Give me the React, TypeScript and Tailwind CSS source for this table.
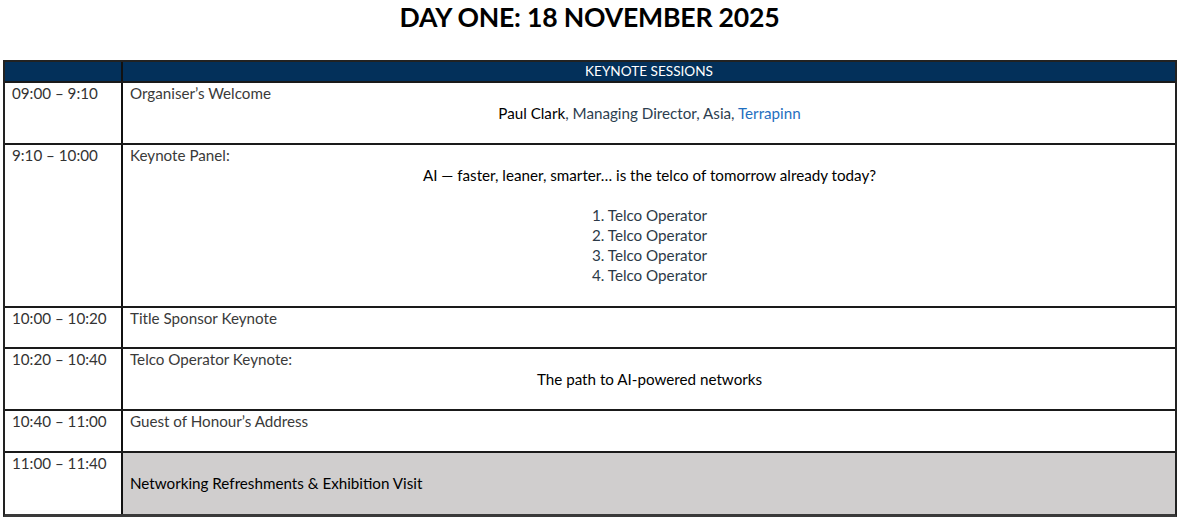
import React from "react";

const F = { fontFamily: "Lato, 'Open Sans', sans-serif" } as React.CSSProperties;

function Line({ children, center = false, className = "" }: { children?: React.ReactNode; center?: boolean; className?: string }) {
  return (
    <div className={`h-[20px] leading-[20px] whitespace-nowrap ${center ? "text-center" : ""} ${className}`}>
      {children ?? "\u00a0"}
    </div>
  );
}

function Row({ time, children, gray = false, extra = "" }: { time: string; children: React.ReactNode; gray?: boolean; extra?: string }) {
  return (
    <div className={`grid grid-cols-[118px_1fr] border-t-2 border-[#1a1a1a]`}>
      <div className="pl-[7px] text-[#333333] border-r-2 border-[#111111]">
        <Line>{time}</Line>
      </div>
      <div className={`pl-[7px] pr-[6px] ${extra} ${gray ? "bg-[#d0cece]" : "bg-white"}`}>{children}</div>
    </div>
  );
}

export default function App() {
  return (
    <div className="w-[1179px] h-[518px] bg-white text-[15.2px]" style={F}>
      <h1 className="text-center font-bold text-[26.6px] leading-[34px] text-black tracking-[-0.2px]">
        DAY ONE: 18 NOVEMBER 2025
      </h1>
      <div className="ml-[3px] mt-[26px] w-[1174px] border-x-2 border-t-2 border-b-[3px] border-[#222222] border-b-[#3a3a3a]">
        <div className="grid grid-cols-[118px_1fr] bg-[#03305a] h-[19px]">
          <div className="border-r-2 border-[#111111]" />
          <div className="text-center text-white text-[13.6px] leading-[19px]">KEYNOTE SESSIONS</div>
        </div>
        <Row time="09:00 – 9:10">
          <Line className="text-[#3a3a3a]">Organiser’s Welcome</Line>
          <Line center>
            <span className="text-black">Paul Clark</span>
            <span className="text-[#2c3e50]">, Managing Director, Asia, </span>
            <span className="text-[#1f6fc0]">Terrapinn</span>
          </Line>
          <Line />
        </Row>
        <Row time="9:10 – 10:00" extra="pb-[1px]">
          <Line className="text-[#3a3a3a]">Keynote Panel:</Line>
          <Line center className="text-black">AI — faster, leaner, smarter… is the telco of tomorrow already today?</Line>
          <Line />
          <Line center className="text-[#2c3a48]">1. Telco Operator</Line>
          <Line center className="text-[#2c3a48]">2. Telco Operator</Line>
          <Line center className="text-[#2c3a48]">3. Telco Operator</Line>
          <Line center className="text-[#2c3a48]">4. Telco Operator</Line>
          <Line />
        </Row>
        <Row time="10:00 – 10:20">
          <Line className="text-[#3a3a3a]">Title Sponsor Keynote</Line>
          <div className="h-[19px]" />
        </Row>
        <Row time="10:20 – 10:40">
          <Line className="text-[#3a3a3a]">Telco Operator Keynote:</Line>
          <Line center className="text-black">The path to AI-powered networks</Line>
          <Line />
        </Row>
        <Row time="10:40 – 11:00">
          <Line className="text-[#3a3a3a]">Guest of Honour’s Address</Line>
          <Line />
        </Row>
        <Row time="11:00 – 11:40" gray extra="pb-[1px]">
          <Line />
          <Line className="text-black">Networking Refreshments &amp; Exhibition Visit</Line>
          <Line />
        </Row>
      </div>
    </div>
  );
}
